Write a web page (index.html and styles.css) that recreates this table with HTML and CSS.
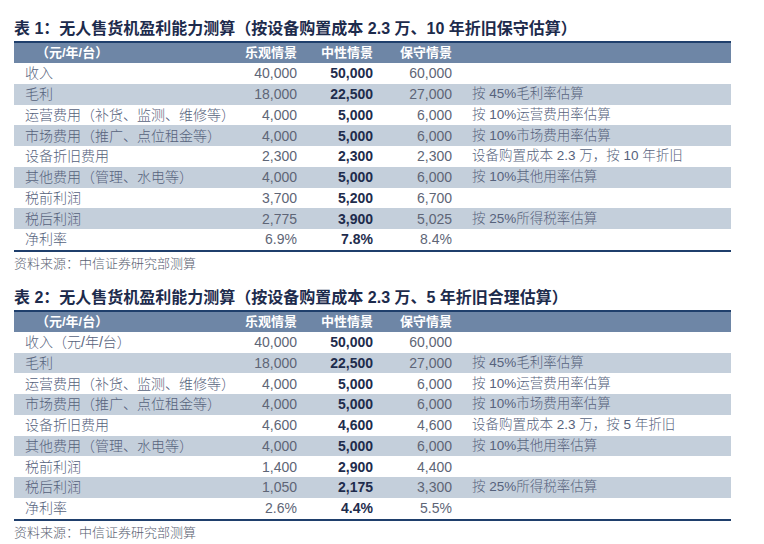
FILE: index.html
```html
<!DOCTYPE html>
<html lang="zh-CN">
<head>
<meta charset="utf-8">
<title>无人售货机盈利能力测算</title>
<link rel="stylesheet" href="styles.css">
</head>
<body>
<div class="page">
  <section class="block">
    <h2 class="title">表 1：无人售货机盈利能力测算（按设备购置成本 2.3 万、10 年折旧保守估算）</h2>
    <table class="data">
      <colgroup><col class="c1"><col class="c2"><col class="c3"><col class="c4"><col class="c5"></colgroup>
      <thead>
        <tr><th class="lab">（元/年/台）</th><th>乐观情景</th><th>中性情景</th><th>保守情景</th><th></th></tr>
      </thead>
      <tbody>
        <tr><td class="lab">收入</td><td>40,000</td><td class="b">50,000</td><td>60,000</td><td class="note"></td></tr>
        <tr class="s"><td class="lab">毛利</td><td>18,000</td><td class="b">22,500</td><td>27,000</td><td class="note">按 45%毛利率估算</td></tr>
        <tr><td class="lab">运营费用（补货、监测、维修等）</td><td>4,000</td><td class="b">5,000</td><td>6,000</td><td class="note">按 10%运营费用率估算</td></tr>
        <tr class="s"><td class="lab">市场费用（推广、点位租金等）</td><td>4,000</td><td class="b">5,000</td><td>6,000</td><td class="note">按 10%市场费用率估算</td></tr>
        <tr><td class="lab">设备折旧费用</td><td>2,300</td><td class="b">2,300</td><td>2,300</td><td class="note">设备购置成本 2.3 万，按 10 年折旧</td></tr>
        <tr class="s"><td class="lab">其他费用（管理、水电等）</td><td>4,000</td><td class="b">5,000</td><td>6,000</td><td class="note">按 10%其他用率估算</td></tr>
        <tr><td class="lab">税前利润</td><td>3,700</td><td class="b">5,200</td><td>6,700</td><td class="note"></td></tr>
        <tr class="s"><td class="lab">税后利润</td><td>2,775</td><td class="b">3,900</td><td>5,025</td><td class="note">按 25%所得税率估算</td></tr>
        <tr><td class="lab">净利率</td><td>6.9%</td><td class="b">7.8%</td><td>8.4%</td><td class="note"></td></tr>
      </tbody>
    </table>
    <p class="source">资料来源：中信证券研究部测算</p>
  </section>

  <section class="block second">
    <h2 class="title">表 2：无人售货机盈利能力测算（按设备购置成本 2.3 万、5 年折旧合理估算）</h2>
    <table class="data">
      <colgroup><col class="c1"><col class="c2"><col class="c3"><col class="c4"><col class="c5"></colgroup>
      <thead>
        <tr><th class="lab">（元/年/台）</th><th>乐观情景</th><th>中性情景</th><th>保守情景</th><th></th></tr>
      </thead>
      <tbody>
        <tr><td class="lab">收入（元/年/台）</td><td>40,000</td><td class="b">50,000</td><td>60,000</td><td class="note"></td></tr>
        <tr class="s"><td class="lab">毛利</td><td>18,000</td><td class="b">22,500</td><td>27,000</td><td class="note">按 45%毛利率估算</td></tr>
        <tr><td class="lab">运营费用（补货、监测、维修等）</td><td>4,000</td><td class="b">5,000</td><td>6,000</td><td class="note">按 10%运营费用率估算</td></tr>
        <tr class="s"><td class="lab">市场费用（推广、点位租金等）</td><td>4,000</td><td class="b">5,000</td><td>6,000</td><td class="note">按 10%市场费用率估算</td></tr>
        <tr><td class="lab">设备折旧费用</td><td>4,600</td><td class="b">4,600</td><td>4,600</td><td class="note">设备购置成本 2.3 万，按 5 年折旧</td></tr>
        <tr class="s"><td class="lab">其他费用（管理、水电等）</td><td>4,000</td><td class="b">5,000</td><td>6,000</td><td class="note">按 10%其他用率估算</td></tr>
        <tr><td class="lab">税前利润</td><td>1,400</td><td class="b">2,900</td><td>4,400</td><td class="note"></td></tr>
        <tr class="s"><td class="lab">税后利润</td><td>1,050</td><td class="b">2,175</td><td>3,300</td><td class="note">按 25%所得税率估算</td></tr>
        <tr><td class="lab">净利率</td><td>2.6%</td><td class="b">4.4%</td><td>5.5%</td><td class="note"></td></tr>
      </tbody>
    </table>
    <p class="source">资料来源：中信证券研究部测算</p>
  </section>
</div>
</body>
</html>
```

FILE: styles.css
```css
html, body {
  margin: 0;
  padding: 0;
  background: #ffffff;
}

body {
  font-family: "Liberation Sans", "Noto Sans CJK SC", sans-serif;
}

.page {
  padding: 17px 0 0 14px;
  width: 717px;
}

.block.second {
  margin-top: 12px;
}

.title {
  margin: 0 0 1px;
  height: 23px;
  line-height: 23px;
  font-size: 16px;
  font-weight: bold;
  color: #1d2b4c;
  white-space: nowrap;
}

.data {
  width: 717px;
  table-layout: fixed;
  border-collapse: collapse;
  border-top: 2px solid #1f3f6c;
  border-bottom: 2px solid #1f3f6c;
}

.c1 { width: 216px; }
.c2 { width: 67px; }
.c3 { width: 76px; }
.c4 { width: 79px; }
.c5 { width: 279px; }

.data th {
  height: 20px;
  padding: 0;
  background: #6e86a6;
  color: #ffffff;
  font-size: 13px;
  font-weight: bold;
  text-align: right;
  line-height: 20px;
  white-space: nowrap;
}

.data th.lab {
  text-align: left;
  padding-left: 22px;
}

.data td {
  height: 20.75px;
  padding: 0;
  font-size: 14px;
  line-height: 20px;
  color: #5e6576;
  text-align: right;
  white-space: nowrap;
}

.data tr.s td {
  background: #c4cfdb;
}

.data td.lab {
  text-align: left;
  padding-left: 11px;
  color: #56627c;
  font-weight: 300;
}

.data td.b {
  font-weight: bold;
  color: #1e2c4c;
}

.data td.note {
  text-align: left;
  padding-left: 20px;
  color: #56627c;
  font-size: 13.5px;
  font-weight: 300;
}

.source {
  margin: 2px 0 0;
  line-height: 20px;
  font-size: 13px;
  color: #5a6272;
  font-weight: 300;
}
```
